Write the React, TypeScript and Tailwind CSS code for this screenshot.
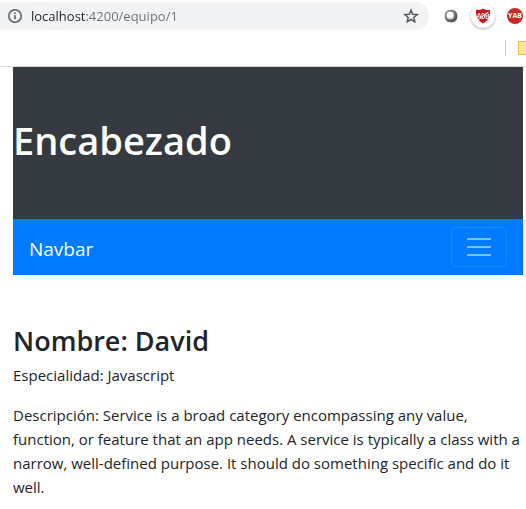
import { useState } from "react";

function InfoIcon() {
  return (
    <svg viewBox="0 0 16 16" className="size-4 shrink-0" fill="none" stroke="#5f6368" aria-hidden="true">
      <circle cx="8" cy="8" r="6.2" strokeWidth="1.6" />
      <path d="M8 7.2v4M8 4.4v1.7" strokeWidth="1.7" />
    </svg>
  );
}

function StarIcon() {
  return (
    <svg viewBox="0 0 16 16" className="size-4" fill="none" stroke="#55595e" strokeWidth="1.5" aria-hidden="true">
      <path d="M8 2.1l1.7 4.1 4.5.4-3.4 2.9 1 4.3L8 11.5l-3.8 2.3 1-4.3-3.4-2.9 4.5-.4z" />
    </svg>
  );
}

function SphereIcon() {
  return (
    <svg viewBox="0 0 14 14" className="size-3.5" aria-hidden="true">
      <defs>
        <linearGradient id="sphere" x1="0" y1="0" x2="1" y2="1">
          <stop offset="0" stopColor="#a0a0a0" />
          <stop offset="1" stopColor="#444" />
        </linearGradient>
      </defs>
      <rect x="0.7" y="0.7" width="12.6" height="12.6" rx="5.4" fill="url(#sphere)" />
      <circle cx="6.4" cy="6.4" r="3.9" fill="#d0d0d0" />
      <circle cx="5.9" cy="5.9" r="3" fill="#fff" />
    </svg>
  );
}

function AdblockIcon() {
  return (
    <svg viewBox="0 0 16 16" className="size-4" aria-hidden="true">
      <path d="M8 .5C10 1.9 12.5 2.2 15 1.8 15.5 8 13.5 12.5 8 15.5 2.5 12.5.5 8 1 1.8 3.5 2.2 6 1.9 8 .5z" fill="#c4161c" />
      <path
        d="M2 10.5l1.6-5h.8L6 10.5M2.8 9h2.6M7 5.5v5h1.2q1.3 0 1.3-1.5V7q0-1.5-1.3-1.5zM11 5.5v5h1.5q1.3 0 1.3-1.3T12.5 8q1.2 0 1.2-1.2T12.5 5.5zM11 8h1.5"
        stroke="#fff"
        strokeWidth=".9"
        fill="none"
      />
      <path d="M2.5 12.5L13.5 3.5" stroke="#fff" strokeWidth="1" />
    </svg>
  );
}

function BrowserBar() {
  return (
    <header className="h-[67px] overflow-hidden border-b border-[#d5d7da] bg-white">
      <div className="flex items-center pt-0.5">
        <div className="-ml-4 flex h-7 w-[445px] items-center rounded-full bg-[#f1f3f4] pr-2.5 pl-[23px]">
          <InfoIcon />
          <input
            aria-label="Dirección"
            readOnly
            value="localhost:4200/equipo/1"
            className="ml-2 h-7 min-w-0 flex-1 bg-[linear-gradient(90deg,#202124_54px,#6b6f74_54px)] bg-clip-text text-[13px] text-transparent outline-none"
          />
          <button aria-label="Favorito"><StarIcon /></button>
        </div>
        <div className="flex flex-1 shrink-0 items-center">
          <button aria-label="Extensión" className="ml-[15px]"><SphereIcon /></button>
          <button aria-label="Adblock" className="ml-[13px] flex size-6 shrink-0 items-center justify-center rounded-full bg-white shadow-[0_1px_3px_#00000055]">
            <AdblockIcon />
          </button>
          <button className="ml-3 flex size-4 shrink-0 items-center justify-center rounded-full bg-[#c82a24] text-[7px] font-bold text-white">
            YAB
          </button>
        </div>
      </div>
      <div className="mt-2.5 flex items-center justify-end gap-3">
        <span className="h-4 w-px bg-[#cdcfd2]" />
        <span className="h-3.5 w-2 border border-r-0 border-[#e0bd4c] bg-[#ffe68f]" />
      </div>
    </header>
  );
}

export default function App() {
  const [open, setOpen] = useState(false);
  return (
    <div className="bg-white font-['Open_Sans','Noto_Sans',sans-serif] text-[#212529]">
      <BrowserBar />
      <main className="pr-[3px] pl-[13px]">
        <div className="bg-[#343a40] pt-12 pb-[54px] text-white">
          <h1 className="text-[38px] leading-[50px] font-semibold">Encabezado</h1>
        </div>
        <nav className="flex items-center justify-between bg-[#007bff] px-4 py-2">
          <a href="#" className="pt-1 text-[19px] leading-[30px] text-white">Navbar</a>
          <button
            aria-label="Menú"
            aria-expanded={open}
            onClick={() => setOpen(!open)}
            className="flex h-10 w-14 flex-col items-center justify-center gap-1.5 rounded border border-white/10"
          >
            <span className="h-0.5 w-6 bg-white/50" />
            <span className="h-0.5 w-6 bg-white/50" />
            <span className="h-0.5 w-6 bg-white/50" />
          </button>
        </nav>
        <section className="pt-12 text-[15px] leading-6">
          <h2 className="mb-1 text-[27px] leading-9 font-semibold">Nombre: David</h2>
          <p className="mb-4">Especialidad: Javascript</p>
          <p>
            Descripción: Service is a broad category encompassing any value, function, or feature that an app
            needs. A service is typically a class with a narrow, well-defined purpose. It should do something
            specific and do it well.
          </p>
        </section>
      </main>
    </div>
  );
}
